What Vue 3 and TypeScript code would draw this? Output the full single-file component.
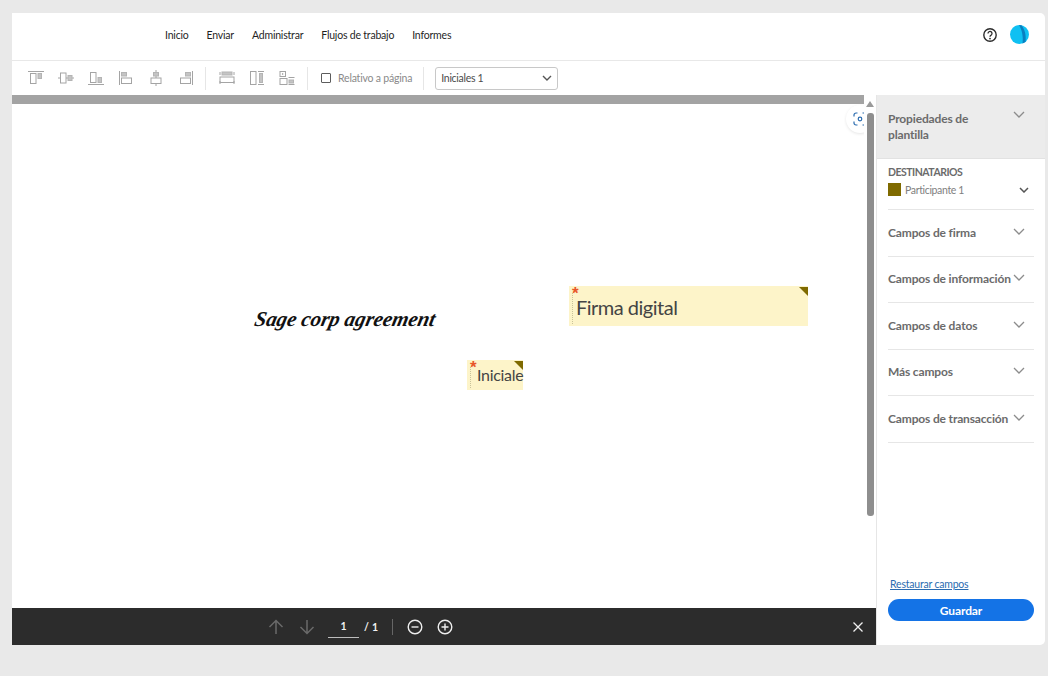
<script setup lang="ts">
const navItems = ['Inicio', 'Enviar', 'Administrar', 'Flujos de trabajo', 'Informes']
const fieldGroups = [
  'Campos de firma',
  'Campos de información',
  'Campos de datos',
  'Más campos',
  'Campos de transacción',
]
</script>

<template>
  <div class="page">
    <div class="frame">
      <header class="topnav">
        <nav class="nav">
          <a v-for="item in navItems" :key="item" class="nav__item">{{ item }}</a>
        </nav>
        <div class="topnav__right">
          <svg class="help" width="16" height="16" viewBox="0 0 16 16">
            <circle cx="8" cy="8" r="6.2" fill="none" stroke="#2c2c2c" stroke-width="1.4" />
            <path d="M6 6.4a2 2 0 1 1 3.1 1.7c-.7.4-1.1.8-1.1 1.6" fill="none" stroke="#2c2c2c" stroke-width="1.3" />
            <circle cx="8" cy="11.6" r=".9" fill="#2c2c2c" />
          </svg>
          <svg width="19" height="19" viewBox="0 0 19 19">
            <circle cx="9.5" cy="9.5" r="9.5" fill="#0fc0f2" />
            <path d="M9 0C12 5 13.500 12 12.500 18.600L15.500 17C16.500 10 14.500 4 11.500 .3z" fill="#0a7fc0" />
          </svg>
        </div>
      </header>

      <div class="toolbar">
        <div class="tools">
          <!-- align top -->
          <svg class="tool" viewBox="0 0 18 16"><path d="M1 1.500h16" /><rect x="3.500" y="3.500" width="5.500" height="10" /><rect class="fill" x="11" y="3.500" width="3.500" height="5" /></svg>
          <!-- align middle -->
          <svg class="tool" viewBox="0 0 18 16"><path d="M1 8h2.500M9 8h2M15 8h2" /><rect x="3.500" y="3" width="5.500" height="10" /><rect class="fill" x="11" y="5.500" width="4" height="5" /></svg>
          <!-- align bottom -->
          <svg class="tool" viewBox="0 0 18 16"><path d="M1 14.500h16" /><rect x="3.500" y="2.500" width="5.500" height="10" /><rect class="fill" x="11" y="7.500" width="3.500" height="5" /></svg>
          <!-- align left -->
          <svg class="tool tool--gap" viewBox="0 0 18 16"><path d="M2.500 1v14" /><rect class="fill" x="4.500" y="2.500" width="5" height="3.500" /><rect x="4.500" y="8" width="10" height="5.500" /></svg>
          <!-- align center -->
          <svg class="tool" viewBox="0 0 18 16"><path d="M9 0v2.500M9 6v2M9 13.500V16" /><rect class="fill" x="6.500" y="2.500" width="5" height="3.500" /><rect x="4" y="8" width="10" height="5.500" /></svg>
          <!-- align right -->
          <svg class="tool" viewBox="0 0 18 16"><path d="M15.500 1v14" /><rect class="fill" x="8.500" y="2.500" width="5" height="3.500" /><rect x="3.500" y="8" width="10" height="5.500" /></svg>
        </div>
        <span class="divider divider--first"></span>
        <div class="tools">
          <!-- same width -->
          <svg class="tool" viewBox="0 0 18 16"><path d="M2 2v3M16 2v3M2 11v3M16 11v3" /><rect class="fill" x="4" y="2" width="10" height="3" /><rect x="2" y="7" width="14" height="5.500" /></svg>
          <!-- same height -->
          <svg class="tool" viewBox="0 0 18 16"><path d="M10 1.500h6M10 14.500h6" /><rect x="2.500" y="1.500" width="5.500" height="13" /><rect class="fill" x="11.500" y="3.500" width="3" height="9" /></svg>
          <!-- same size -->
          <svg class="tool" viewBox="0 0 18 16"><rect x="2" y="1.500" width="5.500" height="5" /><rect x="2" y="8.500" width="7" height="6" /><rect class="fill" x="11" y="10" width="4.500" height="3" /><path d="M10.500 7.500h6M10.500 14.500h6M4.700 3v2" /></svg>
        </div>
        <span class="divider divider--second"></span>
        <label class="relative">
          <span class="relative__box"></span>
          Relativo a página
        </label>
        <span class="divider divider--third"></span>
        <div class="select">
          <span>Iniciales 1</span>
          <svg width="10" height="6" viewBox="0 0 10 6"><path d="M1 1l4 4 4-4" fill="none" stroke="#555" stroke-width="1.400" /></svg>
        </div>
      </div>

      <div class="body">
        <main class="viewer">
          <div class="viewer__main">
            <div class="viewer__scroll">
              <div class="doc-top"></div>
              <div class="doc">
                <span class="doc__title">Sage corp agreement</span>
                <div class="field field--sign">
                  <i class="field__star">*</i>
                  <i class="field__corner"></i>
                  <span class="field__text">Firma digital</span>
                </div>
                <div class="field field--init">
                  <i class="field__star">*</i>
                  <i class="field__corner"></i>
                  <span class="field__text">Iniciale</span>
                </div>
                <button class="scan">
                  <svg width="14" height="14" viewBox="0 0 14 14">
                    <path d="M1 4.500V3a2 2 0 0 1 2-2h1.500M9.500 1H11a2 2 0 0 1 2 2v1.500M13 9.500V11a2 2 0 0 1-2 2H9.500M4.500 13H3a2 2 0 0 1-2-2V9.500" fill="none" stroke="#2b6cb0" stroke-width="1.200" />
                    <circle cx="7" cy="7" r="1.800" fill="none" stroke="#2b6cb0" stroke-width="1.200" />
                  </svg>
                </button>
              </div>
            </div>
            <div class="scrollbar">
              <i class="scrollbar__arrow"></i>
              <div class="scrollbar__thumb"></div>
            </div>
          </div>
          <footer class="pager">
            <svg class="pager__icon" width="16" height="16" viewBox="0 0 16 16"><path d="M8 15V1.500M1.500 8L8 1.500 14.500 8" fill="none" stroke="#6a6a6a" stroke-width="1.500" /></svg>
            <svg class="pager__icon pager__down" width="16" height="16" viewBox="0 0 16 16"><path d="M8 1v13.500M1.500 8L8 14.500 14.500 8" fill="none" stroke="#6a6a6a" stroke-width="1.500" /></svg>
            <span class="pager__input">1</span>
            <span class="pager__total">/ 1</span>
            <span class="pager__sep"></span>
            <svg width="16" height="16" viewBox="0 0 16 16"><circle cx="8" cy="8" r="6.800" fill="none" stroke="#eee" stroke-width="1.400" /><path d="M4.500 8h7" stroke="#eee" stroke-width="1.400" /></svg>
            <svg class="pager__plus" width="16" height="16" viewBox="0 0 16 16"><circle cx="8" cy="8" r="6.800" fill="none" stroke="#eee" stroke-width="1.400" /><path d="M4.500 8h7M8 4.500v7" stroke="#eee" stroke-width="1.400" /></svg>
            <svg class="pager__close" width="12" height="12" viewBox="0 0 12 12"><path d="M1.500 1.500l9 9M10.500 1.500l-9 9" stroke="#f0f0f0" stroke-width="1.300" /></svg>
          </footer>
        </main>

        <aside class="side">
          <div class="side__head">
            <span class="side__title">Propiedades de plantilla</span>
            <svg class="chev chev--head" width="12" height="7" viewBox="0 0 12 7"><path d="M1 1l5 5 5-5" /></svg>
          </div>
          <div class="recipients">
            <div class="recipients__label">DESTINATARIOS</div>
            <div class="recipients__row">
              <span class="swatch"></span>
              <span class="recipients__name">Participante 1</span>
              <svg class="chev chev--dark" width="10" height="6" viewBox="0 0 10 6"><path d="M1 1l4 4 4-4" /></svg>
            </div>
          </div>
          <div v-for="group in fieldGroups" :key="group" class="group">
            <span class="group__name">{{ group }}</span>
            <svg class="chev chev--group" width="12" height="7" viewBox="0 0 12 7"><path d="M1 1l5 5 5-5" /></svg>
          </div>
          <div class="side__bottom">
            <a class="restore">Restaurar campos</a>
            <button class="save">Guardar</button>
          </div>
        </aside>
      </div>
    </div>
  </div>
</template>

<style>
html,
body {
  margin: 0;
  background: #e9e9e9;
}
</style>

<style scoped>
.page {
  box-sizing: border-box;
  width: 1048px;
  height: 676px;
  padding: 13px 3px 31px 12px;
  background: #e9e9e9;
  font-family: Lato, "Open Sans", sans-serif;
  overflow: hidden;
}

.frame {
  display: flex;
  flex-direction: column;
  height: 100%;
  background: #fff;
  border-radius: 0 5px 5px 0;
  overflow: hidden;
}

.topnav {
  display: flex;
  align-items: center;
  justify-content: space-between;
  box-sizing: border-box;
  flex: none;
  height: 48px;
  padding: 0 16px 4px 153px;
  border-bottom: 1px solid #e8e8e8;
}

.nav {
  display: flex;
  gap: 18px;
}

.nav__item {
  font-size: 10.500px;
  letter-spacing: -0.2px;
  color: #1f1f1f;
}

.topnav__right {
  display: flex;
  align-items: center;
  gap: 12px;
}

.toolbar {
  display: flex;
  align-items: center;
  flex: none;
  height: 34px;
  padding-left: 15px;
}

.tools {
  display: flex;
  gap: 12px;
}

.tool {
  width: 18px;
  height: 16px;
  fill: none;
  stroke: #a4a4a4;
  stroke-width: 1;
}

.tool .fill {
  fill: #c4c4c4;
  stroke: #b4b4b4;
}

.divider {
  flex: none;
  width: 1px;
  height: 23px;
  background: #e6e6e6;
}

.divider--first {
  margin: 0 12px 0 10px;
}

.divider--second {
  margin: 0 11px;
}

.divider--third {
  margin: 0 11px 0 11px;
}

.relative {
  display: flex;
  align-items: center;
  gap: 7px;
  margin-left: 2px;
  font-size: 10.500px;
  letter-spacing: -0.2px;
  color: #8a8a8a;
}

.relative__box {
  box-sizing: border-box;
  width: 10px;
  height: 10px;
  border: 1.500px solid #5c5c5c;
  border-radius: 1px;
}

.select {
  box-sizing: border-box;
  display: flex;
  align-items: center;
  justify-content: space-between;
  width: 123px;
  height: 23px;
  padding: 0 5px;
  border: 1px solid #c8c8c8;
  border-radius: 3px;
  font-size: 10.500px;
  letter-spacing: -0.3px;
  color: #4b4b4b;
}

.body {
  display: flex;
  flex: 1;
  min-height: 0;
}

.viewer {
  display: flex;
  flex-direction: column;
  width: 864px;
  flex: none;
}

.viewer__main {
  display: flex;
  flex: 1;
  min-height: 0;
}

.viewer__scroll {
  flex: 1;
  display: flex;
  flex-direction: column;
}

.doc-top {
  flex: none;
  height: 9px;
  background: #a3a3a3;
}

.doc {
  position: relative;
  flex: 1;
  background: #fff;
}

.doc__title {
  position: absolute;
  left: 243px;
  top: 203px;
  font-family: "Liberation Serif", serif;
  font-size: 21px;
  font-weight: 700;
  font-style: italic;
  letter-spacing: -0.1px;
  color: #111;
  white-space: nowrap;
  transform: skewX(-12deg);
}

.field {
  position: absolute;
  background: #fdf4c9;
  color: #444;
}

.field--sign {
  left: 557px;
  top: 182px;
  width: 239px;
  height: 40px;
  font-size: 20px;
  letter-spacing: -0.5px;
}

.field--init {
  left: 455px;
  top: 256px;
  width: 56px;
  height: 30px;
  font-size: 16px;
  letter-spacing: -0.3px;
}

.field__text {
  position: absolute;
  left: 7px;
  top: 11px;
  white-space: nowrap;
  line-height: 1;
}

.field--init .field__text {
  left: 10px;
  top: 7px;
}

.field::before {
  content: "";
  position: absolute;
  left: 3px;
  top: 7px;
  bottom: 2px;
  border-left: 1px dotted #c9c39a;
}

.field__star {
  position: absolute;
  left: 3px;
  top: -1px;
  font-family: "Liberation Sans", sans-serif;
  font-size: 17px;
  font-style: normal;
  font-weight: 700;
  line-height: 1;
  color: #e8562a;
}

.field__corner {
  position: absolute;
  top: 1px;
  right: 0;
  width: 0;
  height: 0;
  border-top: 9px solid #7f6a00;
  border-left: 9px solid transparent;
}

.scan {
  position: absolute;
  top: 1px;
  right: -12px;
  display: flex;
  align-items: center;
  justify-content: center;
  width: 28px;
  height: 28px;
  padding: 0;
  border: 0;
  border-radius: 50%;
  background: #fff;
  box-shadow: 0 1px 3px rgba(0, 0, 0, 0.1);
  transform: translateX(-2px);
}

.scrollbar {
  position: relative;
  z-index: 1;
  flex: none;
  width: 12px;
  background: #fff;
  display: flex;
  flex-direction: column;
  align-items: center;
}

.scrollbar__arrow {
  margin-top: 6px;
  border-left: 4px solid transparent;
  border-right: 4px solid transparent;
  border-bottom: 6px solid #9a9a9a;
}

.scrollbar__thumb {
  width: 7px;
  height: 403px;
  margin-top: 6px;
  border-radius: 3px;
  background: #8e8e8e;
}

.pager {
  display: flex;
  align-items: center;
  flex: none;
  height: 37px;
  width: 864px;
  padding-left: 256px;
  box-sizing: border-box;
  background: #2c2c2c;
}

.pager__down {
  margin-left: 15px;
}

.pager__input {
  box-sizing: border-box;
  width: 31px;
  height: 23px;
  margin-left: 13px;
  padding-top: 5px;
  border-bottom: 1px solid #bdbdbd;
  font-size: 10.500px;
  font-weight: 700;
  text-align: center;
  color: #f2f2f2;
}

.pager__total {
  margin-left: 5px;
  font-size: 10.500px;
  font-weight: 700;
  letter-spacing: 0.3px;
  color: #f2f2f2;
}

.pager__sep {
  width: 1px;
  height: 16px;
  margin: 0 14px;
  background: #666;
}

.pager__plus {
  margin-left: 14px;
}

.pager__close {
  margin-left: auto;
  margin-right: 12px;
}

.side {
  display: flex;
  flex-direction: column;
  flex: 1;
  min-width: 0;
  border-left: 1px solid #e6e6e6;
}

.side__head {
  display: flex;
  align-items: flex-start;
  justify-content: space-between;
  box-sizing: border-box;
  height: 64px;
  padding: 16px 20px 0 11px;
  background: #ececec;
  border-bottom: 1px solid #e2e2e2;
}

.side__title {
  width: 100px;
  font-size: 12px;
  font-weight: 700;
  letter-spacing: -0.15px;
  line-height: 16px;
  color: #6b6b6b;
}

.chev {
  flex: none;
  fill: none;
  stroke: #8c8c8c;
  stroke-width: 1.300;
}

.chev--group {
  margin-top: 2px;
}

.chev--dark {
  stroke: #555;
  stroke-width: 1.500;
  margin-left: auto;
  margin-right: 5px;
}

.recipients {
  box-sizing: border-box;
  height: 51px;
  margin: 0 11px;
  padding-top: 7px;
  border-bottom: 1px solid #e6e6e6;
}

.recipients__label {
  font-size: 10.500px;
  font-weight: 700;
  letter-spacing: -0.5px;
  line-height: 13px;
  color: #6b6b6b;
}

.recipients__row {
  display: flex;
  align-items: center;
  margin-top: 4px;
}

.swatch {
  width: 13px;
  height: 13px;
  margin-right: 4px;
  background: #7f6a00;
}

.recipients__name {
  font-size: 10.500px;
  letter-spacing: -0.35px;
  color: #808080;
}

.group {
  display: flex;
  align-items: flex-start;
  justify-content: space-between;
  box-sizing: border-box;
  height: 46.500px;
  margin: 0 11px;
  padding: 15.500px 9px 0 0;
  border-bottom: 1px solid #e6e6e6;
}

.group__name {
  font-size: 12px;
  font-weight: 700;
  letter-spacing: -0.15px;
  line-height: 14px;
  color: #6b6b6b;
  white-space: nowrap;
}

.side__bottom {
  margin: auto 11px 0;
  padding-bottom: 24px;
}

.restore {
  display: block;
  margin-left: 2px;
  font-size: 10.500px;
  letter-spacing: -0.2px;
  line-height: 14px;
  color: #2b6cb0;
  text-decoration: underline;
}

.save {
  display: block;
  width: 146px;
  height: 22px;
  margin-top: 8px;
  padding: 0;
  border: 0;
  border-radius: 11px;
  background: #1473e6;
  font-family: inherit;
  font-size: 12px;
  font-weight: 700;
  letter-spacing: -0.1px;
  color: #fff;
}
</style>
